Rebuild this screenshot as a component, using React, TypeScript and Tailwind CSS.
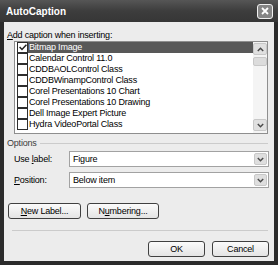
const items = [
  "Bitmap Image",
  "Calendar Control 11.0",
  "CDDBAOLControl Class",
  "CDDBWinampControl Class",
  "Corel Presentations 10 Chart",
  "Corel Presentations 10 Drawing",
  "Dell Image Expert Picture",
  "Hydra VideoPortal Class",
];

const font = { fontFamily: "'Liberation Sans', Arial, sans-serif" };

const Chevron = ({ up }: { up?: boolean }) => (
  <svg width="7" height="5" viewBox="0 0 7 5">
    <path
      d={up ? "M0.8 4 L3.5 1.3 L6.2 4" : "M0.8 1 L3.5 3.7 L6.2 1"}
      fill="none"
      stroke="#4a4a4a"
      strokeWidth="1.5"
    />
  </svg>
);

const Select = ({ value }: { value: string }) => (
  <div className="flex h-[16px] flex-1 items-center border border-[#a2a2a2] bg-white pl-[3px] pr-[1px]">
    <span className="flex-1">{value}</span>
    <div className="flex h-[12px] w-[13px] items-center justify-center rounded-[2px] border border-[#c8c8c8] bg-[#dedede]">
      <Chevron />
    </div>
  </div>
);

const Button = ({ children, w }: { children: React.ReactNode; w: string }) => (
  <div
    className={`flex h-[16px] ${w} items-center justify-center rounded-[3px] border border-[#404040] bg-gradient-to-b from-[#fbfbfb] to-[#e4e4e4]`}
  >
    {children}
  </div>
);

export default function App() {
  return (
    <div
      className="flex h-[265px] w-[278px] flex-col whitespace-nowrap bg-[#2b2b2b] text-[9px] leading-[11px] tracking-[-0.2px] text-black"
      style={font}
    >
      {/* title bar */}
      <div className="flex h-[22px] items-center justify-between bg-gradient-to-b from-[#565656] via-[#3d3d3d] to-[#363636] pl-[6px] pr-[5px]">
        <span className="text-[10px] font-bold tracking-[0px] text-white">AutoCaption</span>
        <div className="flex h-[15px] w-[16px] items-center justify-center rounded-[3px] border border-[#f0f0f0] bg-[#858585]">
          <svg width="8" height="8" viewBox="0 0 8 8">
            <path d="M1 1 L7 7 M7 1 L1 7" stroke="white" strokeWidth="1.8" />
          </svg>
        </div>
      </div>

      {/* body */}
      <div className="mx-[4px] mb-[4px] flex flex-1 flex-col bg-[#ececec] px-[3px] pt-[8px]">
        <div>
          <span className="underline">A</span>dd caption when inserting:
        </div>

        {/* listbox */}
        <div className="ml-[7px] mr-[3px] flex h-[93px] border border-[#8e8e8e] bg-white">
          <div className="flex flex-1 flex-col">
            {items.map((it, i) => (
              <div key={it} className="flex h-[11px] items-center">
                <div className="ml-[2px] flex h-[11px] w-[11px] items-center justify-center border border-[#2e2e2e] bg-white">
                  {i === 0 && (
                    <svg width="8" height="7" viewBox="0 0 8 7">
                      <path d="M0.6 3 L3 5.5 L7.4 0.8" fill="none" stroke="#222" strokeWidth="1.5" />
                    </svg>
                  )}
                </div>
                <div
                  className={`flex h-[11px] flex-1 items-center pl-[1px] ${
                    i === 0 ? "bg-[#585858] text-white" : ""
                  }`}
                >
                  {it}
                </div>
              </div>
            ))}
          </div>
          {/* scrollbar */}
          <div className="flex w-[14px] flex-col bg-[#f4f4f4] py-[1px]">
            <div className="flex h-[12px] items-center justify-center rounded-[2px] border border-[#c8c8c8] bg-[#e0e0e0]">
              <Chevron up />
            </div>
            <div className="mt-[2px] h-[9px] rounded-[2px] border border-[#c8c8c8] bg-[#dcdcdc]" />
            <div className="flex-1" />
            <div className="mb-[1px] flex h-[12px] items-center justify-center rounded-[2px] border border-[#c8c8c8] bg-[#e0e0e0]">
              <Chevron />
            </div>
          </div>
        </div>

        {/* options group */}
        <div className="mt-[4px] flex items-center">
          <span className="text-[#3c3c3c]">Options</span>
          <div className="ml-[3px] mr-[3px] h-px flex-1 bg-[#cbcbcb]" />
        </div>

        <div className="mt-[2px] flex items-center pl-[7px] pr-[2px]">
          <span className="w-[55px]">
            Use <span className="underline">l</span>abel:
          </span>
          <Select value="Figure" />
        </div>
        <div className="mt-[5px] flex items-center pl-[7px] pr-[2px]">
          <span className="w-[55px]">
            <span className="underline">P</span>osition:
          </span>
          <Select value="Below item" />
        </div>

        <div className="mt-[15px] flex gap-[6px] pl-[1px]">
          <Button w="w-[73px]">
            <span>
              <span className="underline">N</span>ew Label...
            </span>
          </Button>
          <Button w="w-[72px]">
            <span>
              N<span className="underline">u</span>mbering...
            </span>
          </Button>
        </div>

        <div className="ml-[5px] mr-[3px] mt-[11px] h-px bg-[#cbcbcb]" />

        <div className="mt-[10px] flex justify-end gap-[7px] pr-[2px]">
          <Button w="w-[57px]">OK</Button>
          <Button w="w-[57px]">Cancel</Button>
        </div>
      </div>
    </div>
  );
}
